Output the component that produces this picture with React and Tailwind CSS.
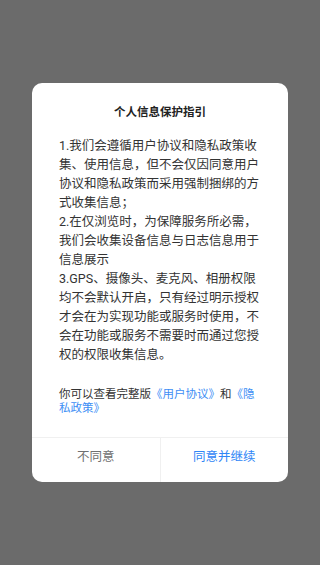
export default function App() {
  const font = { fontFamily: 'Roboto, "Noto Sans CJK SC", sans-serif' };
  return (
    <div
      className="w-[320px] h-[565px] bg-[#6b6b6b] flex items-center justify-center"
      style={font}
    >
      <div className="w-[256px] bg-white rounded-[10px] flex flex-col overflow-hidden">
        <div className="pt-[21px] px-[27px]">
          <h1 className="text-center text-[11.5px] leading-[16px] font-bold text-[#222]">
            个人信息保护指引
          </h1>
          <div className="mt-[16.5px] text-[12.5px] leading-[19px] text-[#333] w-[202px]">
            <p>
              1.我们会遵循用户协议和隐私政策收集、使用信息，但不会仅因同意用户协议和隐私政策而采用强制捆绑的方式收集信息；
            </p>
            <p>2.在仅浏览时，为保障服务所必需，我们会收集设备信息与日志信息用于信息展示</p>
            <p>
              3.GPS、摄像头、麦克风、相册权限均不会默认开启，只有经过明示授权才会在为实现功能或服务时使用，不会在功能或服务不需要时而通过您授权的权限收集信息。
            </p>
          </div>
          <p className="mt-[22.5px] text-[11.5px] leading-[14px] text-[#333] w-[202px]">
            你可以查看完整版<span className="text-[#3d8ef5]">《用户协议》</span>和
            <span className="text-[#3d8ef5]">《隐私政策》</span>
          </p>
        </div>
        <div className="mt-[22.5px] border-t border-[#f0f0f0] flex h-[45px]">
          <button className="flex-1 flex items-center justify-center pb-[5px] text-[12.5px] text-[#707070]">
            不同意
          </button>
          <div className="w-px bg-[#f0f0f0]" />
          <button className="flex-1 flex items-center justify-center pb-[5px] text-[12.5px] text-[#2f86f6]">
            同意并继续
          </button>
        </div>
      </div>
    </div>
  );
}
